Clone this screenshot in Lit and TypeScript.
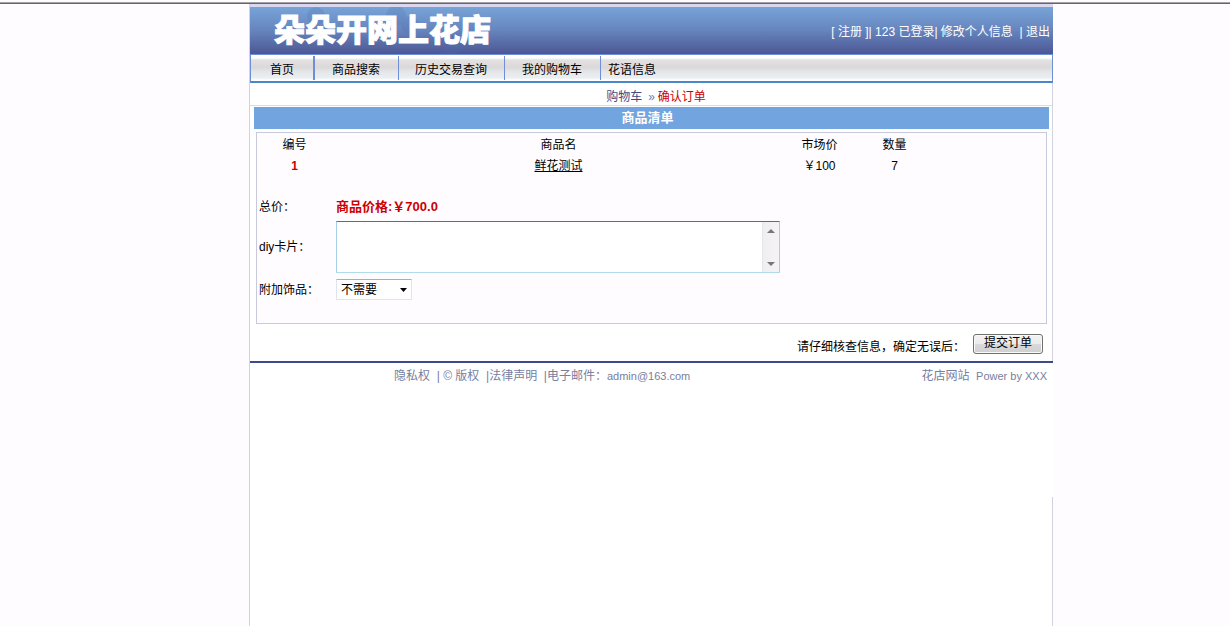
import { LitElement, html, css } from "lit";
import { customElement, state } from "lit/decorators.js";

interface OrderItem {
  no: number;
  name: string;
  price: string;
  count: number;
}

@customElement("app-root")
export class AppRoot extends LitElement {
  static styles = css`
    :host {
      display: block;
      min-height: 100vh;
      box-sizing: border-box;
      padding: 0 177px 0 249px;
      position: relative;
      background: #fffcff;
      color: #000;
      font: 12px/16px "Liberation Sans", "Noto Sans CJK SC", sans-serif;
    }
    * { box-sizing: border-box; }
    a { color: inherit; text-decoration: none; }
    .rule {
      height: 4px;
      margin: 0 -177px 0 -249px;
      background: linear-gradient(#fffcff 2px, #a5a3aa 2px 3px, #66646c 3px);
    }
    .page {
      display: flex;
      flex-direction: column;
      min-height: calc(100vh - 4px);
      background: #fff;
      border-left: 1px solid #d3d3e0;
    }
    .masthead {
      display: flex;
      align-items: center;
      justify-content: space-between;
      position: relative;
      height: 50px;
      padding: 0 3px 0 24px;
      border-top: 3px solid #d9d8ee;
      background: linear-gradient(#78a4d8, #6684bd 50%, #4c5795);
      color: #fff;
    }
    .clouds {
      position: absolute;
      left: 50px;
      top: 0;
      width: 180px;
      height: 47px;
    }
    .brand {
      position: relative;
      margin: 0;
      padding-bottom: 6px;
      font-family: "Noto Sans CJK SC", sans-serif;
      font-size: 31px;
      line-height: 40px;
      font-weight: 900;
      -webkit-text-stroke: 1px #fff;
    }
    .account { display: flex; padding-top: 2px; white-space: pre; }
    .nav {
      display: flex;
      height: 29px;
      border: 1px solid #6e8fd8;
      border-bottom: 2px solid #4987c9;
      padding: 1px 0;
      background: linear-gradient(#fff 3px, #e3e1e2 5px, #dad8d9 12px, #e6e9ec 18px, #eceff1 23px, #fff 25px);
    }
    .nav a {
      padding: 5px 16px 3px;
      line-height: 18px;
      border-right: 1px solid #6e8fd8;
    }
    .nav a:first-child { padding-left: 19px; padding-right: 19px; border-right-width: 2px; }
    .nav a:nth-child(2) { padding-left: 17px; padding-right: 18px; }
    .nav a:nth-child(3) { padding-right: 17px; }
    .nav a:nth-child(4) { padding-left: 17px; padding-right: 18px; }
    .nav a:last-child { border: 0; padding-left: 7px; }
    .main {
      padding: 6px 3px 6px 4px;
      border-right: 1px solid #d3d3e0;
    }
    .crumbs {
      display: flex;
      justify-content: center;
      gap: 6px;
      margin: 0 -3px 1px -4px;
      padding-left: 10px;
      border-bottom: 1px solid #dcdce4;
      color: #3f4a85;
    }
    .arrow { color: #5b83ba; }
    .current { color: #c00; margin-left: -3px; }
    .title {
      margin: 0;
      padding-right: 8px;
      background: #72a5df;
      color: #fff;
      font-size: 13px;
      line-height: 22px;
      text-align: center;
    }
    .panel {
      margin: 3px 2px 9px;
      padding-bottom: 23px;
      border: 1px solid #c9c9dc;
      background: #fffcff;
    }
    .items {
      width: 100%;
      table-layout: fixed;
      border-collapse: collapse;
      text-align: center;
    }
    .items th, .items td { padding: 0; font-weight: 400; }
    .items th { line-height: 24px; }
    .items td { line-height: 18px; }
    .items .no { width: 75px; }
    .items .price { width: 69px; }
    .items .count { width: 81px; }
    .items .spare { width: 111px; }
    .items td.no { color: #c00; font-weight: 700; }
    .items a { text-decoration: underline; }
    .form {
      display: grid;
      grid-template-columns: 77px 1fr;
      align-items: center;
      justify-items: start;
      row-gap: 6px;
      padding: 24px 0 0 2px;
    }
    .total { color: #c00; font-size: 13px; font-weight: 700; }
    .cardbox {
      display: flex;
      width: 100%;
      max-width: 444px;
      height: 52px;
      border: 1px solid #a9cfe6;
      border-top-color: #3a76ab;
      border-bottom-color: #b0dcee;
      background: #fff;
    }
    .card {
      flex: 1;
      margin: 0;
      padding: 2px 4px;
      resize: none;
      overflow: hidden;
      border: 0;
      outline: 0;
      background: none;
      font: inherit;
    }
    .scroll {
      display: flex;
      flex-direction: column;
      align-items: center;
      justify-content: space-between;
      width: 17px;
      padding: 7px 0 6px;
      border-left: 1px solid #e6e5e8;
      background: linear-gradient(90deg, #efeef0, #f6f3f7);
    }
    .scroll svg { width: 8px; height: 4px; fill: #777; }
    .extra {
      appearance: none;
      width: 76px;
      height: 21px;
      margin: 0;
      padding: 0 4px;
      border: 1px solid #e0e4ec;
      border-top-color: #a9abb5;
      border-radius: 1px;
      background: #fff url("data:image/svg+xml,%3Csvg xmlns='http://www.w3.org/2000/svg' width='7' height='4'%3E%3Cpath d='M0 0H7L3.5 4Z'/%3E%3C/svg%3E") right 4px center no-repeat;
      color: #000;
      font: inherit;
    }
    .confirm {
      display: flex;
      justify-content: flex-end;
      align-items: center;
      gap: 8px;
      padding-right: 6px;
    }
    .confirm span { padding-top: 6px; }
    .submit {
      width: 70px;
      height: 20px;
      padding: 0 0 2px;
      border: 1px solid #707070;
      border-radius: 3px;
      background: linear-gradient(#f2f2f2, #ebebeb 50%, #dadada 50%, #cfcfcf);
      box-shadow: inset 0 0 0 1px #fafafa;
      color: #000;
      font: inherit;
    }
    .footer {
      display: flex;
      padding: 5px 6px 0 144px;
      border-top: 2px solid #3c4b8b;
      color: #77809f;
      white-space: pre;
    }
    .mail, .power { font-size: 11px; }
    .owner { margin-left: auto; }
    .spacer { width: 100%; height: 113px; }
    .rest {
      flex: 1;
      border-right: 1px solid #d3d3e0;
    }
  `;

  @state() private items: OrderItem[] = [
    { no: 1, name: "鲜花测试", price: "￥100", count: 7 },
  ];

  private menu = ["首页", "商品搜索", "历史交易查询", "我的购物车", "花语信息"];

  render() {
    return html`
      <div class="rule"></div>
      <div class="page">
        <header class="masthead">
          <svg class="clouds" viewBox="0 0 180 47" fill="#4d6eac" opacity=".22" aria-hidden="true">
            <circle cx="16" cy="9" r="9" /><circle cx="96" cy="9" r="10" />
            <circle cx="110" cy="18" r="9" /><circle cx="84" cy="20" r="8" />
            <path d="M140 47q10-14 26-10q-4 8-12 10z" />
          </svg>
          <h1 class="brand">朵朵开网上花店</h1>
          <div class="account"><a href="#">[ 注册 ]</a><span>| 123 已登录| </span><a href="#">修改个人信息</a><span>  | </span><a href="#">退出</a></div>
        </header>
        <nav class="nav">${this.menu.map((m) => html`<a href="#">${m}</a>`)}</nav>
        <main class="main">
          <div class="crumbs">
            <a href="#">购物车</a><span class="arrow">»</span><span class="current">确认订单</span>
          </div>
          <h2 class="title">商品清单</h2>
          <section class="panel">
            <table class="items">
              <thead>
                <tr>
                  <th class="no">编号</th>
                  <th>商品名</th>
                  <th class="price">市场价</th>
                  <th class="count">数量</th>
                  <th class="spare"></th>
                </tr>
              </thead>
              <tbody>
                ${this.items.map(
                  (i) => html`<tr>
                    <td class="no">${i.no}</td>
                    <td><a href="#">${i.name}</a></td>
                    <td>${i.price}</td>
                    <td>${i.count}</td>
                    <td></td>
                  </tr>`
                )}
              </tbody>
            </table>
            <div class="form">
              <span>总价：</span>
              <span class="total">商品价格:￥700.0</span>
              <label for="card">diy卡片：</label>
              <div class="cardbox">
                <textarea id="card" class="card"></textarea>
                <div class="scroll" aria-hidden="true">
                  <svg viewBox="0 0 8 4"><path d="M0 4L4 0L8 4Z" /></svg>
                  <svg viewBox="0 0 8 4"><path d="M0 0L4 4L8 0Z" /></svg>
                </div>
              </div>
              <label for="extra">附加饰品：</label>
              <select id="extra" class="extra"><option>不需要</option></select>
            </div>
          </section>
          <div class="confirm">
            <span>请仔细核查信息，确定无误后：</span>
            <button class="submit" type="button">提交订单</button>
          </div>
        </main>
        <footer class="footer"><a href="#">隐私权</a><span>  | </span><a href="#">© 版权</a><span>  |</span><a href="#">法律声明</a><span>  |</span><span>电子邮件：</span><a class="mail" href="#">admin@163.com</a><span class="owner">花店网站  <span class="power">Power by XXX</span></span></footer>
        <div class="spacer"></div>
        <div class="rest"></div>
      </div>
    `;
  }
}
